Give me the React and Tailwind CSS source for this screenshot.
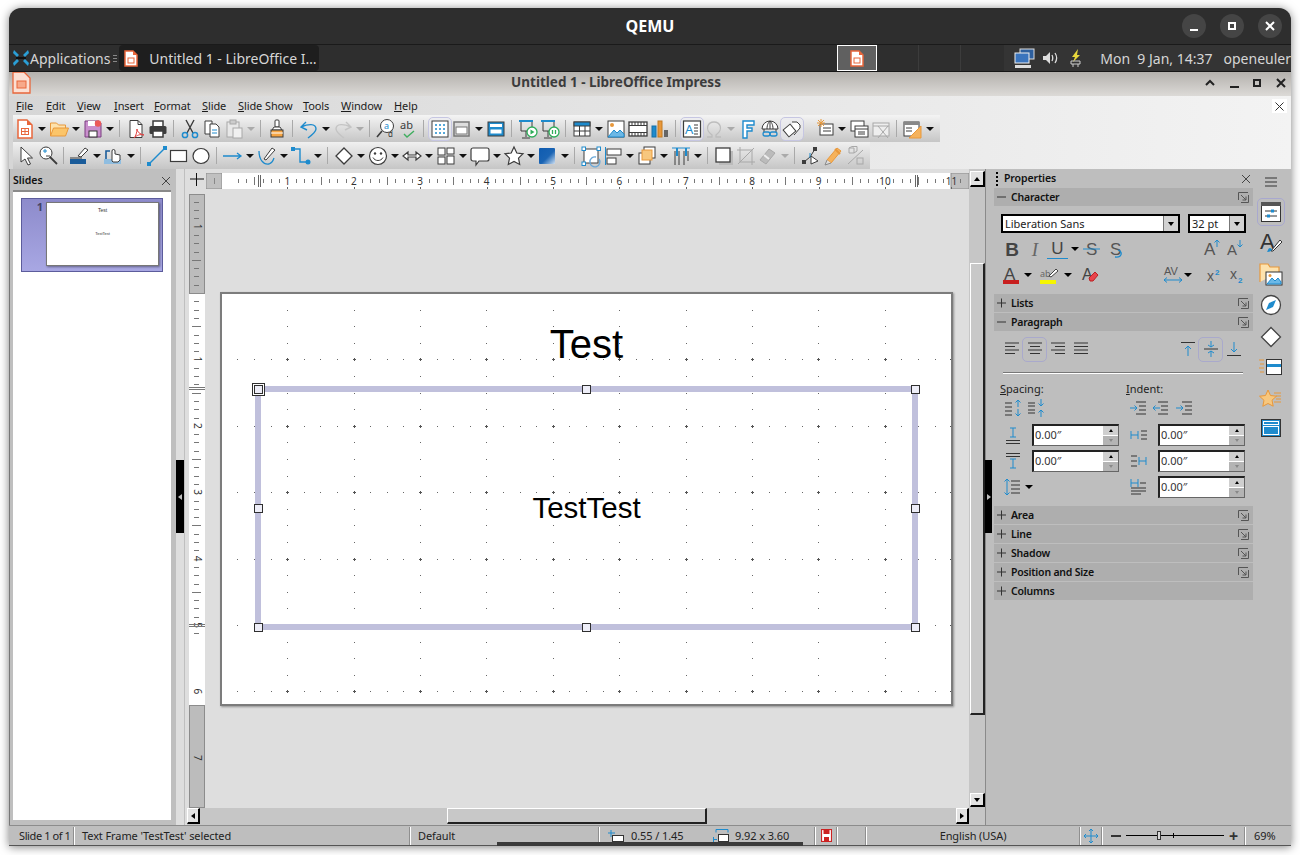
import React from 'react';

const D = '#3c3c3c';
const B = '#1e8bcd';
const O = '#e8983b';
const G = '#a8a8a8';

const icons = {
  new: <><path d="M4 2h9l5 5v13H4z" fill="#fff" stroke="#e8663b" strokeWidth="1.5" /><path d="M13 2l5 5h-5z" fill="#e8663b" /><rect x="7.5" y="10.5" width="7" height="6" fill="#fff" stroke="#e8663b" /><path d="M8 13.5h6M11 11v5" stroke="#e8663b" /></>,
  open: <><path d="M2.5 18V5h6l2 2h7v3" fill="#fde2ad" stroke={O} /><path d="M2.5 18l3-8h15l-3 8z" fill="#fbc56a" stroke={O} /></>,
  save: <><path d="M3 3h14l2 2v14H3z" fill="#c98fcd" stroke="#7a3c80" /><rect x="7" y="13" width="8" height="6" fill="#fff" stroke="#333" /><rect x="6" y="3" width="7" height="5" fill="#fff" /><circle cx="16" cy="5.5" r="3.2" fill="#ec5a5a" /></>,
  pdf: <><path d="M5 2.5h8l4 4v13H5z" fill="#fff" stroke={D} /><path d="M13 2.5v4h4" stroke={D} /><path d="M9 20c2-2 3-6 3-9 0 3 3 5 7 6-4-1-7 0-10 3z" fill="none" stroke="#e04040" /></>,
  print: <><rect x="6" y="3" width="10" height="6" fill="#fff" stroke={D} strokeWidth="1.5" /><rect x="2.5" y="8" width="17" height="8" rx="1.5" fill={D} /><rect x="6" y="13" width="10" height="6" fill="#fff" stroke={D} strokeWidth="1.5" /></>,
  cut: <><path d="M7 2l7 13M15 2L8 15" stroke={D} strokeWidth="1.4" /><circle cx="6" cy="17" r="2.6" stroke={B} strokeWidth="1.5" /><circle cx="16" cy="17" r="2.6" stroke={B} strokeWidth="1.5" /></>,
  copy: <><path d="M4 3h7v13H4z" fill="#fff" stroke={D} /><path d="M9 6h6l3 3v10H9z" fill="#fff" stroke={D} /><path d="M11 12h5M11 15h5" stroke={B} /></>,
  paste: <><rect x="4" y="4" width="12" height="15" fill="#e8e8e8" stroke={G} /><rect x="7" y="2" width="6" height="4" fill="#ccc" stroke={G} /><rect x="10" y="10" width="9" height="10" fill="#f0f0f0" stroke={G} /></>,
  brush: <><rect x="9" y="2" width="4" height="7" rx="1" fill="#fff" stroke={D} /><path d="M6 12l2-3h6l2 3z" fill="#fff" stroke={D} /><rect x="5" y="12" width="12" height="7" fill="#f5a443" stroke={D} /><path d="M5 15h12" stroke="#fff" /></>,
  undo: <><path d="M8 4L3 9l6 3M3 9c7-3 15-4 15 2 0 3-4 6-8 9" stroke={B} strokeWidth="1.4" /></>,
  redo: <><path d="M14 4l5 5-6 3M19 9C12 6 4 5 4 11c0 3 4 6 8 9" stroke="#c4c4c4" strokeWidth="1.4" /></>,
  find: <><circle cx="12" cy="8" r="6.5" fill="#fff" stroke={D} /><path d="M7 13l-5 6" stroke={D} strokeWidth="1.6" /><text x="9" y="11" fontSize="9" fill={B} fontFamily="Noto Sans">a</text><text x="13" y="19" fontSize="8" fill={D} fontFamily="Noto Sans">d</text></>,
  spell: <><text x="3" y="11" fontSize="11" fill={D} fontFamily="Noto Sans">ab</text><path d="M7 16l3 3 7-6" stroke="#3fae5f" strokeWidth="1.4" /></>,
  grid: <><rect x="3" y="3" width="16" height="16" fill="#fff" stroke={D} /><path d="M6.5 6.5h1v1h-1zM10.5 6.5h1v1h-1zM14.5 6.5h1v1h-1zM6.5 10.5h1v1h-1zM10.5 10.5h1v1h-1zM14.5 10.5h1v1h-1zM6.5 14.5h1v1h-1zM10.5 14.5h1v1h-1zM14.5 14.5h1v1h-1z" stroke={B} /></>,
  disp: <><rect x="3" y="4" width="15" height="14" fill="#ddd" stroke="#777" strokeWidth="1.5" /><rect x="5" y="9" width="11" height="7" fill="#fff" stroke="#777" /></>,
  master: <><rect x="3" y="4" width="16" height="14" fill={B} stroke={D} /><rect x="5" y="6" width="12" height="3" fill="#fff" /><rect x="5" y="11" width="12" height="5" fill="#fff" stroke={B} /></>,
  start: <><path d="M2 3h14M4 3v10h11V3M9 13v6M5 20h8" stroke={D} /><path d="M2 3h14" stroke={B} strokeWidth="2" /><circle cx="15" cy="14" r="5" fill="#fff" stroke="#2fae5a" strokeWidth="1.3" /><path d="M13.5 11.5l4 2.5-4 2.5z" fill="#2fae5a" /></>,
  pause: <><path d="M4 3v10h11V3M9 13v6M5 20h8" stroke={D} /><path d="M2 3h14" stroke={B} strokeWidth="2" /><circle cx="15" cy="14" r="5" fill="#fff" stroke="#2fae5a" strokeWidth="1.3" /><path d="M13.5 12v4M16.5 12v4" stroke="#2fae5a" strokeWidth="1.3" /></>,
  table: <><rect x="3" y="4" width="16" height="14" fill="#fff" stroke={D} /><rect x="3" y="4" width="16" height="4" fill={B} stroke={D} /><path d="M3 13h16M8.5 8v10M14 8v10" stroke={D} /></>,
  image: <><rect x="3" y="3" width="16" height="16" fill="#fff" stroke={D} /><circle cx="7" cy="7" r="2" fill={O} /><path d="M3 19l6-7 3 3 3-3 4 4v3z" fill="#6cb8e6" stroke={B} /></>,
  film: <><rect x="2" y="4" width="18" height="14" fill="#fff" stroke={D} strokeWidth="1.3" /><path d="M2 7.5h18M2 14.5h18" stroke={D} /><path d="M5 4v3M8 4v3M11 4v3M14 4v3M17 4v3M5 15v3M8 15v3M11 15v3M14 15v3M17 15v3" stroke={D} /></>,
  chart: <><rect x="3" y="8" width="4" height="11" fill={B} stroke="#1670a8" /><rect x="9" y="3" width="4" height="16" fill={O} stroke="#c47a20" /><rect x="15" y="12" width="4" height="7" fill="#666" /></>,
  textbox: <><rect x="2.5" y="3" width="17" height="16" fill="#fff" stroke={D} strokeWidth="1.2" /><text x="4" y="16" fontSize="13" fill={B} fontFamily="Noto Sans">A</text><path d="M13 7h4M13 10h4M13 13h4M13 16h4" stroke={D} /></>,
  omega: <><path d="M4 19h5v-2c-8-6-4-13 2-13s10 7 2 13v2h5" stroke="#bdbdbd" strokeWidth="1.3" /></>,
  fontwork: <><path d="M6 3h11v4h-7v3h5v3h-5v7H6z" fill="#fff" stroke={B} strokeWidth="1.4" /></>,
  hyper: <><path d="M3 11a8 8 0 0 1 16 0zM8 11c0-5 2-7 3-8 1 1 3 3 3 8M11 3v8M5 11v3M17 11v3" stroke={D} fill="#fff" /><rect x="4" y="14" width="7" height="4" rx="2" stroke={B} strokeWidth="1.3" /><rect x="11" y="14" width="7" height="4" rx="2" stroke={B} strokeWidth="1.3" /></>,
  glue: <><path d="M11 4h5l3 3v3l-6 7" fill="#fff" stroke={D} /><rect x="4" y="8" width="9" height="9" fill="#fff" stroke={D} transform="rotate(-40 8.500 12.500)" /></>,
  comment: <><rect x="6" y="6" width="13" height="11" fill="#fff" stroke={D} /><path d="M9 10h8M9 13h8" stroke={D} /><path d="M7 1v8M3 5h8M4 2l6 6M10 2L4 8" stroke={O} /></>,
  dup: <><rect x="3" y="3" width="13" height="10" fill="#fff" stroke={D} /><rect x="7" y="8" width="13" height="11" fill="#fff" stroke={D} /><path d="M7 11h13M10 14h7M10 16h7" stroke={D} /></>,
  del: <><rect x="3" y="5" width="16" height="13" fill="#eee" stroke={G} /><path d="M3 8h16M8 8l10 12M18 8L8 20" stroke={G} /></>,
  layout: <><rect x="2" y="4" width="15" height="14" fill="#fff" stroke={D} /><rect x="2" y="4" width="15" height="3" fill="#888" /><path d="M4 10h6M4 13h6" stroke={D} /><path d="M19 8v12H7z" fill="#f5b25c" stroke={O} /></>,

  pointer: <><path d="M6 2v15l4-3 3 6 2.500-1-3-6h5z" fill="#fff" stroke={D} /></>,
  zoom: <><circle cx="9" cy="8" r="6" fill="#fff" stroke={D} /><path d="M13 12l7 7" stroke={D} strokeWidth="1.8" /><path d="M6 6h4M8 4v4" stroke={B} /><path d="M9 11h4" stroke="#444" /></>,
  linecol: <><rect x="1" y="14" width="16" height="5" fill="#1a5c9a" /><path d="M1 13h12" stroke={D} /><path d="M9 11l7-8 3 2-7 7z" fill="#fff" stroke={D} /></>,
  fillcol: <><rect x="1" y="14" width="17" height="5" fill="#8fbde0" /><path d="M3 14V6h4" stroke="#1a5c9a" strokeWidth="1.6" /><path d="M9 16V6a1.500 1.500 0 0 1 3 0v3l5 1v5l-2 2H10z" fill="#fff" stroke={D} /></>,
  line: <><path d="M3 19L19 3" stroke={B} strokeWidth="1.4" /><rect x="1" y="17" width="4" height="4" fill={B} /><rect x="17" y="1" width="4" height="4" fill={B} /></>,
  rect: <rect x="2.500" y="5.500" width="16" height="11" fill="#fff" stroke={D} strokeWidth="1.2" />,
  ellipse: <ellipse cx="11" cy="11" rx="8" ry="7.500" fill="#fff" stroke={D} strokeWidth="1.2" />,
  arrowl: <><path d="M1 11h18M15 8l4 3-4 3" stroke={B} strokeWidth="1.3" /></>,
  curve: <><path d="M3 6c0 8 4 14 10 13 3-1 4-3 5-6" stroke={B} strokeWidth="1.3" /><path d="M8 14L16 3l3 2-9 10z" fill="#fff" stroke={D} /></>,
  conn: <><path d="M3 4h7v13h8" stroke={B} strokeWidth="1.4" /><rect x="1" y="2" width="4" height="4" fill={B} /><circle cx="18" cy="17" r="2.500" fill={B} /></>,
  diamond: <path d="M11 3l8 8-8 8-8-8z" fill="#fff" stroke={D} strokeWidth="1.3" />,
  smile: <><circle cx="11" cy="11" r="8.500" fill="#fff" stroke={D} strokeWidth="1.2" /><circle cx="8" cy="8.500" r="1.200" fill={D} /><circle cx="14" cy="8.500" r="1.200" fill={D} /><path d="M6 12.500c2 4 8 4 10 0" stroke={D} /></>,
  dbl: <path d="M7 7l-5 4 5 4v-3h8v3l5-4-5-4v3H7z" fill="#fff" stroke={D} strokeWidth="1.2" />,
  flow: <><rect x="3" y="3" width="7" height="7" fill="#fff" stroke={D} /><rect x="3" y="12" width="7" height="7" fill="#fff" stroke={D} /><rect x="12" y="3" width="7" height="6" fill="#fff" stroke={D} /><rect x="12" y="11" width="7" height="8" fill="#fff" stroke={D} /></>,
  callout: <path d="M4 3h14a2 2 0 0 1 2 2v9a2 2 0 0 1-2 2h-8l-3 4v-4H4a2 2 0 0 1-2-2V5a2 2 0 0 1 2-2z" fill="#fff" stroke={D} strokeWidth="1.2" />,
  star: <path d="M11 2l2.800 6 6.200.8-4.500 4.300 1.200 6.400L11 16.500 5.300 19.500l1.200-6.400L2 8.800 8.200 8z" fill="#fff" stroke={D} strokeWidth="1.2" />,
  cube: <><defs><linearGradient id="cg" x1="0" y1="0" x2="1" y2="1"><stop offset="0" stopColor="#0f5cb0" /><stop offset=".55" stopColor="#1a64b4" /><stop offset="1" stopColor="#cfe0f2" /></linearGradient></defs><rect x="2" y="3" width="16" height="16" rx="1" fill="url(#cg)" /></>,
  rotate: <><rect x="4" y="4" width="14" height="14" fill="#fff" stroke={D} /><rect x="2" y="2" width="3.500" height="3.500" fill="#fff" stroke={B} /><rect x="17" y="2" width="3.500" height="3.500" fill="#fff" stroke={B} /><rect x="2" y="17" width="3.500" height="3.500" fill="#fff" stroke={B} /><path d="M19 14a5 5 0 1 1-3-2" stroke="#6aa8d8" strokeWidth="1.4" /></>,
  align: <><path d="M3.500 2v18" stroke={B} /><rect x="5" y="4" width="14" height="6" fill="#fff" stroke={D} /><rect x="5" y="13" width="9" height="6" fill="#fff" stroke={D} /></>,
  arrange: <><rect x="8" y="2" width="11" height="11" fill="#fff" stroke={D} /><rect x="3" y="8" width="11" height="11" fill="#fff" stroke={D} /><rect x="6" y="5" width="10" height="10" fill="#f7c77e" stroke={O} /></>,
  dist: <><path d="M2 3h18" stroke={B} /><path d="M5 6v14M9 6v14M14 6v14M18 6v10" stroke={D} /><path d="M7 3v8M16 3v8" stroke={B} strokeWidth="2" /></>,
  shadow: <><rect x="6" y="6" width="14" height="14" fill="#bbb" /><rect x="3" y="3" width="14" height="14" fill="#fff" stroke={D} strokeWidth="1.300" /></>,
  crop: <><path d="M5 2v15h15M2 5h15v15M3 19L19 3" stroke={G} /></>,
  filter: <><path d="M3 15l9-11 6 4-9 11z" fill="#bbb" stroke={G} /><path d="M7 10l5 4" stroke="#eee" strokeWidth="2" /></>,
  points: <><path d="M4 17l6-5 5-8" stroke={D} /><rect x="2" y="15" width="4" height="4" fill={D} /><rect x="13" y="2" width="4" height="4" fill={D} /><path d="M10 8v5" stroke={B} /><path d="M11 11l7 5-7 3z" fill="#fff" stroke={D} /></>,
  glueP: <><path d="M5 15L15 3l4 3L9 18z" fill="#f5b25c" stroke={O} /><path d="M5 15l-2 5 6-2" fill="#ddd" stroke="#888" /><path d="M13 4l5 5" stroke={O} strokeWidth="2" /></>,
  ext: <><path d="M5 3h5v5H5zM5 3l3-1.500h5V6l-3 2" stroke={G} /><path d="M4 19L19 5" stroke={G} /><rect x="13" y="13" width="6" height="6" stroke={G} /></>,
};

function Ic({ n, on }) {
  return (
    <span className={`w-[22px] h-[22px] shrink-0 flex items-center justify-center rounded-sm ${on ? 'outline outline-1 outline-[#c6c6e2] bg-[#ececf2]/60' : ''}`}>
      <svg width="22" height="22" viewBox="0 0 22 22" fill="none" className="overflow-visible">{icons[n]}</svg>
    </span>
  );
}

const Dd = ({ off }) => (
  <span className="w-[12px] shrink-0 flex justify-center">
    <span className={`w-0 h-0 border-x-[4px] border-x-transparent border-t-[4px] ${off ? 'border-t-[#aaaaaa]' : 'border-t-[#111111]'}`} />
  </span>
);
const Sep = () => <span className="w-px h-[17px] ml-[3px] mr-[5px] shrink-0 bg-[#a9a9a9]" />;
const Sep2 = () => <span className="w-px h-[17px] ml-[4px] mr-[5px] shrink-0 bg-[#a9a9a9]" />;

function Toolbar1() {
  return (
    <div className="w-[927px] h-[27px] flex items-center pl-[1px] bg-gradient-to-b from-[#f4f4f4] to-[#c6c6c6]">
      <Ic n="new" /><Dd /><Ic n="open" /><Dd /><Ic n="save" /><Dd /><Sep />
      <Ic n="pdf" /><Ic n="print" /><Sep2 />
      <Ic n="cut" /><Ic n="copy" /><Ic n="paste" /><Dd off /><Sep />
      <Ic n="brush" /><Sep2 />
      <Ic n="undo" /><Dd /><Ic n="redo" /><Dd off /><Sep />
      <Ic n="find" /><Ic n="spell" /><Sep2 />
      <Ic n="grid" on /><Ic n="disp" /><Dd /><Ic n="master" /><Sep2 />
      <Ic n="start" /><Ic n="pause" /><Sep2 />
      <Ic n="table" /><Dd /><Ic n="image" /><Ic n="film" /><Ic n="chart" /><Sep2 />
      <Ic n="textbox" on /><Ic n="omega" /><Dd off /><Ic n="fontwork" /><Ic n="hyper" /><Ic n="glue" on />
      <span className="w-[11px] shrink-0" />
      <Ic n="comment" /><Dd /><Ic n="dup" /><Ic n="del" /><Sep2 />
      <Ic n="layout" /><Dd />
    </div>
  );
}

function Toolbar2() {
  return (
    <div className="w-[857px] h-[27px] flex items-center pl-[2px] bg-gradient-to-b from-[#f0f0f0] to-[#c6c6c6]">
      <Ic n="pointer" /><Ic n="zoom" /><Sep2 />
      <Ic n="linecol" /><Dd /><Ic n="fillcol" /><Dd /><Sep />
      <Ic n="line" /><Ic n="rect" /><Ic n="ellipse" /><Sep2 />
      <Ic n="arrowl" /><Dd /><Ic n="curve" /><Dd /><Ic n="conn" /><Dd /><Sep />
      <Ic n="diamond" /><Dd /><Ic n="smile" /><Dd /><Ic n="dbl" /><Dd /><Ic n="flow" /><Dd /><Ic n="callout" /><Dd /><Ic n="star" /><Dd /><Ic n="cube" /><Dd /><Sep />
      <Ic n="rotate" /><Ic n="align" /><Dd /><Ic n="arrange" /><Dd /><Ic n="dist" /><Dd /><Sep />
      <Ic n="shadow" /><Ic n="crop" /><Ic n="filter" /><Dd off /><Sep />
      <Ic n="points" /><Ic n="glueP" /><Ic n="ext" />
    </div>
  );
}

const menus = [
  ['File', 'F', 'ile', 'w-[30px]'],
  ['Edit', 'E', 'dit', 'w-[31px]'],
  ['View', 'V', 'iew', 'w-[37px]'],
  ['Insert', 'I', 'nsert', 'w-[40px]'],
  ['Format', 'F', 'ormat', 'w-[48px]'],
  ['Slide', 'S', 'lide', 'w-[36px]'],
  ['Slide Show', 'S', 'lide Show', 'w-[65px]'],
  ['Tools', 'T', 'ools', 'w-[38px]'],
  ['Window', 'W', 'indow', 'w-[53px]'],
  ['Help', 'H', 'elp', 'w-[30px]'],
];

function HRuler() {
  const ticks = [];
  for (let i = 2; i < 90; i++) {
    const x = 15 + i * 8.3;
    if (x > 760 || i % 8 === 0) continue;
    ticks.push(<rect key={i} x={Math.round(x)} y={i % 4 === 0 ? 4 : 6} width="1" height={i % 4 === 0 ? 8 : 4} fill="#777" />);
  }
  const nums = [];
  for (let k = 1; k <= 11; k++) {
    const x = 15 + k * 66.4;
    nums.push(<text key={k} x={x} y="12" fontSize="10" textAnchor="middle" fill="#333" fontFamily="Noto Sans">{k}</text>);
    nums.push(<rect key={'b' + k} x={Math.round(x)} y="14" width="1" height="2" fill="#666" />);
  }
  return (
    <svg width="763" height="16" className="block">
      <rect x="0" y="0" width="16" height="16" fill="#c0c0c0" stroke="#8c8c8c" />
      <rect x="16" y="0" width="729" height="16" fill="#fff" />
      <rect x="745" y="0" width="18" height="16" fill="#c0c0c0" stroke="#8c8c8c" />
      <rect x="8" y="5" width="1" height="6" fill="#888" />
      {ticks}{nums}
      <path d="M52.500 2v12M54.500 2v12M709.500 2v12M711.500 2v12" stroke="#666" />
    </svg>
  );
}

function VRuler() {
  const ticks = [];
  for (let i = -12; i < 42; i++) {
    const y = 99 + i * 8.3;
    if (y < 2 || y > 612 || i % 8 === 0) continue;
    ticks.push(<rect key={i} x={i % 4 === 0 ? 3 : 5} y={Math.round(y)} width={i % 4 === 0 ? 9 : 5} height="1" fill="#777" />);
  }
  const nums = [];
  [-1, 1, 2, 3, 4, 5, 6, 7].forEach((k) => {
    const y = 99 + k * 66.4;
    const n = Math.abs(k);
    nums.push(<text key={k} x="8" y={y} fontSize="10" textAnchor="middle" dominantBaseline="middle" fill="#333" fontFamily="Noto Sans" transform={`rotate(90 8 ${y})`}>{n}</text>);
  });
  return (
    <svg width="16" height="614" className="block shrink-0">
      <rect x="0" y="0" width="16" height="614" fill="#fff" />
      <rect x=".5" y=".5" width="15" height="99" fill="#bcbcbc" stroke="#8c8c8c" />
      <rect x=".5" y="511.500" width="15" height="102" fill="#bcbcbc" stroke="#8c8c8c" />
      {ticks}{nums}
      <path d="M0 193.500h16M0 195.500h16M0 430.500h16M0 432.500h16" stroke="#777" />
    </svg>
  );
}

const Handle = ({ className }) => <span className={`absolute w-[9px] h-[9px] bg-[#eeeef8] border border-[#2f2f2f] ${className}`} />;

function SlideCanvas() {
  return (
    <div className="relative w-[733px] h-[414px] bg-white border-2 border-[#7c7c7c] shadow-[1px_1px_2px_rgba(0,0,0,.35)] shrink-0 font-['Liberation_Sans',sans-serif]">
      <svg width="729" height="410" className="absolute left-0 top-0">
        {Array.from({ length: 46 }).map((_, ix) => Array.from({ length: 26 }).map((__, iy) => {
          const onV = (ix - 3) % 4 === 0;
          const onH = (iy - 3) % 4 === 0;
          if (!onV && !onH) return null;
          const x = Math.round(15.300 + ix * 16.600);
          const y = Math.round(15.500 + iy * 16.600);
          if (onV && onH) return <path key={ix + '-' + iy} d={`M${x - 1} ${y + 0.5}h3M${x + 0.5} ${y - 1}v3`} stroke="#555" />;
          return <rect key={ix + '-' + iy} x={x} y={y} width="1" height="1" fill="#666" />;
        }))}
      </svg>
      <div className="absolute left-0 right-0 top-[25px] text-center text-[40px] leading-[50px] text-black">Test</div>
      <div className="absolute left-[33px] top-[92px] w-[663px] h-[244px] border-[6px] border-[#c0c0dc] flex items-center justify-center text-[29.5px] text-black">TestTest</div>
      <span className="absolute left-[30px] top-[89px] w-[13px] h-[13px] border border-[#2f2f2f] bg-white" />
      <Handle className="left-[32px] top-[91px]" />
      <Handle className="left-[360px] top-[91px]" />
      <Handle className="left-[689px] top-[91px]" />
      <Handle className="left-[32px] top-[210px]" />
      <Handle className="left-[689px] top-[210px]" />
      <Handle className="left-[32px] top-[329px]" />
      <Handle className="left-[360px] top-[329px]" />
      <Handle className="left-[689px] top-[329px]" />
    </div>
  );
}

const SBtn = ({ dir, className = '' }) => (
  <span className={`flex items-center justify-center bg-[#e2e2e2] border-r-2 border-b-2 border-black border-l border-t border-l-white border-t-white shrink-0 ${className}`}>
    {dir === 'u' && <span className="w-0 h-0 border-x-[3px] border-x-transparent border-b-[4px] border-b-black" />}
    {dir === 'd' && <span className="w-0 h-0 border-x-[3px] border-x-transparent border-t-[4px] border-t-black" />}
    {dir === 'l' && <span className="w-0 h-0 border-y-[3px] border-y-transparent border-r-[4px] border-r-black" />}
    {dir === 'r' && <span className="w-0 h-0 border-y-[3px] border-y-transparent border-l-[4px] border-l-black" />}
  </span>
);

const Ext = () => (
  <svg width="11" height="11" viewBox="0 0 11 11" fill="none" className="shrink-0 mr-[2px]">
    <path d="M.5 8V.5H10" stroke="#555" /><path d="M10.500 3v7.500H3" stroke="#555" /><path d="M3 3l5 5M8 4.500V8H4.500" stroke="#555" />
  </svg>
);

function Sec({ label, open, ext = true, className = '' }) {
  return (
    <div className={`h-[18px] bg-[#aeaeae] flex items-center pl-[2px] pr-[2px] ${className}`}>
      <svg width="10" height="10" viewBox="0 0 10 10" className="ml-[1px] shrink-0">
        <path d={open ? 'M0 5h9' : 'M0 5h9M4.500 .5v9'} stroke="#333" fill="none" />
      </svg>
      <span className="ml-[4px] flex-1 text-[10.5px] tracking-[-0.2px] font-semibold text-[#111111] leading-none">{label}</span>
      {ext && <Ext />}
    </div>
  );
}

const ComboBtn = () => (
  <span className="w-[15px] h-full bg-[#d2d2d2] border-l border-[#777777] flex items-center justify-center">
    <span className="w-0 h-0 border-x-[3px] border-x-transparent border-t-[4px] border-t-black" />
  </span>
);

function Spin({ className = '' }) {
  return (
    <div className={`w-[87px] h-[22px] bg-white flex border-t-2 border-l-2 border-[#222222] border-r border-b border-r-[#666666] border-b-[#666666] ${className}`}>
      <span className="flex-1 pl-[1px] text-[11px] leading-[18px] text-[#333333]">0.00″</span>
      <span className="w-[15px] flex flex-col gap-px bg-white">
        <span className="flex-1 bg-[#cfcfcf] flex items-center justify-center"><span className="w-0 h-0 border-x-[2px] border-x-transparent border-b-[3px] border-b-black" /></span>
        <span className="flex-1 bg-[#b4b4b4] flex items-center justify-center"><span className="w-0 h-0 border-x-[2px] border-x-transparent border-t-[3px] border-t-[#888888]" /></span>
      </span>
    </div>
  );
}

const Si = ({ children, w = 22, className = '' }) => (
  <svg width={w} height="20" viewBox={`0 0 ${w} 20`} fill="none" className={`shrink-0 overflow-visible ${className}`}>{children}</svg>
);
const Tri = ({ className = '' }) => <span className={`w-0 h-0 shrink-0 border-x-[4px] border-x-transparent border-t-[4px] border-t-black ${className}`} />;
const Al = ({ rows, on }) => (
  <span className={`w-[23px] h-[23px] shrink-0 flex items-center justify-center rounded-sm ${on ? 'outline outline-1 outline-[#a9a9cc]' : ''}`}>
    <svg width="16" height="14" viewBox="0 0 16 14" fill="none"><path d={rows} stroke="#333" /></svg>
  </span>
);

function Sidebar() {
  return (
    <div className="w-[306px] shrink-0 flex bg-[#bebebe] border-l-[1px] border-[#8a8a8a]">
      <div className="w-[267px] pl-[8px] shrink-0">
        <div className="h-[19px] flex items-center text-[10.5px] tracking-[-0.1px] font-semibold text-[#111111]">
          <span className="flex flex-col gap-[2px] ml-[2px] mr-[6px]">
            <span className="w-[2px] h-[2px] bg-black" /><span className="w-[2px] h-[2px] bg-black" /><span className="w-[2px] h-[2px] bg-black" /><span className="w-[2px] h-[2px] bg-black" />
          </span>
          <span className="flex-1 leading-none">Properties</span>
          <svg width="10" height="10" viewBox="0 0 10 10" className="mr-[2px]"><path d="M1 1l8 8M9 1L1 9" stroke="#444" fill="none" /></svg>
        </div>
        <Sec label="Character" open />
        <div className="h-[88px] pl-[7px] pt-[8px] relative">
          <div className="flex gap-[8px]">
            <div className="w-[179px] h-[19px] bg-white flex border-2 border-black text-[11px] leading-[15px] text-[#222222]">
              <span className="flex-1 pl-[2px]">Liberation Sans</span><ComboBtn />
            </div>
            <div className="w-[58px] h-[19px] bg-white flex border-2 border-black text-[11px] leading-[15px] text-[#222222]">
              <span className="flex-1 pl-[2px]">32 pt</span><ComboBtn />
            </div>
          </div>
          <div className="flex items-center h-[20px] mt-[6px] text-[#444444]">
            <span className="w-[22px] text-center text-[19px] font-bold leading-none font-['Liberation_Sans',sans-serif]">B</span>
            <span className="w-[24px] text-center text-[19px] italic leading-none text-[#666666] font-['Liberation_Serif',serif]">I</span>
            <span className="w-[21px] text-center text-[17px] leading-[18px] border-b-[1.5px] border-[#1e8bcd] font-['Liberation_Sans',sans-serif]">U</span>
            <Tri className="ml-[3px]" />
            <Si w={22} className="ml-[2px]"><text x="5" y="16" fontSize="17" fill="#555" fontFamily="Liberation Sans">S</text><path d="M2 10h17" stroke="#1e8bcd" /></Si>
            <Si w={22} className="ml-[2px]"><text x="5" y="16" fontSize="17" fill="#555" fontFamily="Liberation Sans">S</text><path d="M10 18c7 1 8-5 3-7" stroke="#1e8bcd" strokeWidth="1.300" /></Si>
            <span className="ml-[76px]"><Si><text x="1" y="16" fontSize="17" fill="#555" fontFamily="Liberation Sans">A</text><path d="M14 8V1M11.500 3.500L14 1l2.500 2.500" stroke="#1e8bcd" /></Si></span>
            <span className="ml-[0px]"><Si><text x="2" y="16" fontSize="15" fill="#555" fontFamily="Liberation Sans">A</text><path d="M15 1v7M12.500 5.500L15 8l2.500-2.500" stroke="#1e8bcd" /></Si></span>
          </div>
          <div className="flex items-center h-[20px] mt-[6px] text-[#333333]">
            <span className="w-[22px] text-center"><Si><text x="3" y="15" fontSize="17" fill="#444" fontFamily="Liberation Sans">A</text><rect x="2" y="15" width="16" height="4" fill="#c81f1f" /></Si></span>
            <Tri className="ml-[1px]" />
            <span className="ml-[6px]"><Si w={24}><text x="2" y="12" fontSize="9" fill="#666" fontFamily="Noto Sans">ab</text><path d="M11 11l7-7 2 2-7 6z" fill="#fff" stroke="#444" /><rect x="2" y="15" width="16" height="4" fill="#f5f500" /></Si></span>
            <Tri className="ml-[2px]" />
            <span className="ml-[8px]"><Si><text x="2" y="15" fontSize="16" fill="#444" fontFamily="Liberation Sans">A</text><path d="M9 13l6-6 3 3-5 6h-3z" fill="#e8434c" stroke="#b22" /></Si></span>
            <span className="ml-[59px]"><Si w={24}><text x="3" y="10" fontSize="11" fill="#555" fontFamily="Liberation Sans">AV</text><path d="M3 15h18M6 12.500L3 15l3 2.500M18 12.500l3 2.500-3 2.500" stroke="#1e8bcd" /></Si></span>
            <Tri className="ml-[-1px]" />
            <span className="ml-[13px]"><Si><text x="2" y="16" fontSize="14" fill="#555" fontFamily="Liberation Sans">x</text><text x="10" y="10" fontSize="8" fontWeight="bold" fill="#1e8bcd" fontFamily="Liberation Sans">2</text></Si></span>
            <span className="ml-[1px]"><Si><text x="2" y="14" fontSize="14" fill="#555" fontFamily="Liberation Sans">x</text><text x="10" y="18" fontSize="8" fontWeight="bold" fill="#1e8bcd" fontFamily="Liberation Sans">2</text></Si></span>
          </div>
        </div>
        <Sec label="Lists" className="mb-[1px]" />
        <Sec label="Paragraph" open />
        <div className="flex items-center pl-[6px] pt-[2px] h-[34px]">
          <Al rows="M1 1h14M1 4.500h10M1 8h14M1 11.500h10" />
          <Al rows="M1 1h14M3 4.500h10M1 8h14M3 11.500h10" on />
          <Al rows="M1 1h14M5 4.500h10M1 8h14M5 11.500h10" />
          <Al rows="M1 1h14M1 4.500h14M1 8h14M1 11.500h14" />
          <span className="w-[84px]" />
          <span className="w-[23px] flex justify-center"><Si w={18}><path d="M2 3.500h14" stroke="#333" /><path d="M9 17V7M6 10l3-3 3 3" stroke="#1e8bcd" /></Si></span>
          <span className="w-[23px] h-[23px] flex items-center justify-center outline outline-1 outline-[#a9a9cc] rounded-sm"><Si w={18}><path d="M2 10h14" stroke="#333" /><path d="M9 2v6M6 6l3 2 3-2M9 18v-6M6 14l3-2 3 2" stroke="#1e8bcd" /></Si></span>
          <span className="w-[23px] flex justify-center"><Si w={18}><path d="M2 16.500h14" stroke="#333" /><path d="M9 3v10M6 10l3 3 3-3" stroke="#1e8bcd" /></Si></span>
        </div>
        <div className="ml-[9px] mt-[7px] w-[240px] h-[2px] bg-[#777777] border-b border-white" />
        <div className="flex pl-[6px] mt-[8px] h-[117px]">
          <div className="w-[126px]">
            <div className="text-[11px] leading-[14px] text-[#222222]"><span className="underline">S</span>pacing:</div>
            <div className="flex mt-[1px] ml-[3px] h-[22px] items-center gap-[1px]">
              <Si><path d="M2 5h7M2 9h7M2 13h7M2 17h7" stroke="#333" /><path d="M15 2v7M12.500 4.500L15 2l2.500 2.500M15 18v-7M12.500 15.500L15 18l2.500-2.500" stroke="#1e8bcd" /></Si>
              <Si><path d="M2 5h7M2 8h7M2 12h7M2 15h7" stroke="#333" /><path d="M15 1v7M12.500 5.500L15 8l2.500-2.500M15 19v-7M12.500 14.500L15 12l2.500 2.500" stroke="#1e8bcd" /></Si>
            </div>
            <div className="flex items-center mt-[5px]">
              <span className="w-[32px] pl-[4px]"><Si><path d="M2 15.500h14M2 18.500h14" stroke="#333" /><path d="M9 3v9M6 3h6M6 12h6" stroke="#1e8bcd" /></Si></span>
              <Spin />
            </div>
            <div className="flex items-center mt-[4px]">
              <span className="w-[32px] pl-[4px]"><Si><path d="M2 2.500h14M2 5.500h14" stroke="#333" /><path d="M9 8v9M6 8h6M6 17h6" stroke="#1e8bcd" /></Si></span>
              <Spin />
            </div>
            <div className="flex items-center mt-[5px] h-[20px] pl-[3px]">
              <Si w={18}><path d="M8 4h9M8 8h9M8 12h9M8 16h9" stroke="#333" /><path d="M4 2v16M1.500 4.500L4 2l2.500 2.500M1.500 15.500L4 18l2.500-2.500" stroke="#1e8bcd" /></Si>
              <Tri className="ml-[4px]" />
            </div>
          </div>
          <div className="w-[120px]">
            <div className="text-[11px] leading-[14px] text-[#222222]"><span className="underline">I</span>ndent:</div>
            <div className="flex mt-[1px] ml-[3px] h-[22px] items-center gap-[1px]">
              <Si w={21}><path d="M7 4h10M10 8h7M10 12h7M7 16h10" stroke="#333" /><path d="M1 10h7M5.500 7.500L8 10l-2.500 2.500" stroke="#1e8bcd" /></Si>
              <Si w={23}><path d="M7 4h10M10 8h7M10 12h7M7 16h10" stroke="#333" /><path d="M2 10h7M4.500 7.500L2 10l2.500 2.500" stroke="#1e8bcd" /></Si>
              <Si w={21}><path d="M7 4h10M10 8h7M10 12h7M7 16h10" stroke="#333" /><path d="M1 10h7M5.500 7.500L8 10l-2.500 2.500" stroke="#1e8bcd" /></Si>
            </div>
            <div className="flex items-center mt-[5px]">
              <span className="w-[32px] pl-[4px]"><Si><path d="M1 6v8M8 6v8M1 10h7" stroke="#1e8bcd" /><path d="M11 6h6M11 10h6M11 14h6" stroke="#333" /></Si></span>
              <Spin />
            </div>
            <div className="flex items-center mt-[4px]">
              <span className="w-[32px] pl-[4px]"><Si><path d="M1 5h6M1 10h6M1 15h6" stroke="#333" /><path d="M9 6v8M16 6v8M9 10h7" stroke="#1e8bcd" /></Si></span>
              <Spin />
            </div>
            <div className="flex items-center mt-[4px]">
              <span className="w-[32px] pl-[4px]"><Si><path d="M1 2v8M8 2v8M1 6h7" stroke="#1e8bcd" /><path d="M10 6h6M1 11h15M1 14h15M1 17h10" stroke="#333" /></Si></span>
              <Spin />
            </div>
          </div>
        </div>
        <div className="mt-[7px] flex flex-col gap-[1px]">
          <Sec label="Area" />
          <Sec label="Line" />
          <Sec label="Shadow" />
          <Sec label="Position and Size" />
          <Sec label="Columns" ext={false} />
        </div>
      </div>
      <div className="flex-1 flex flex-col items-center pr-[2px]">
        <svg width="12" height="10" viewBox="0 0 12 10" className="mt-[8px] shrink-0"><path d="M0 1h12M0 5h12M0 9h12" stroke="#333" fill="none" /></svg>
        <span className="mt-[12px] w-[26px] h-[26px] shrink-0 outline outline-1 outline-[#a8a8cf] rounded-sm flex items-center justify-center">
          <svg width="20" height="20" viewBox="0 0 20 20" fill="none"><rect x=".5" y=".5" width="19" height="19" fill="#fff" stroke="#333" /><rect x="0" y="0" width="20" height="4" fill="#555" /><path d="M4 9h12M4 14h12" stroke="#333" /><rect x="10" y="7.500" width="3" height="3" fill="#1e8bcd" /><rect x="6" y="12.500" width="3" height="3" fill="#1e8bcd" /></svg>
        </span>
        <svg width="24" height="24" viewBox="0 0 24 24" fill="none" className="mt-[5px] shrink-0"><text x="1" y="19" fontSize="22" fill="#333" fontFamily="Liberation Sans">A</text><path d="M12 21l9-11 2 2-9 9z" fill="#fff" stroke="#333" /><path d="M8 22c3 0 5-1 5-3l-2-1c-2 0-2 3-3 4z" fill="#1e8bcd" /></svg>
        <svg width="24" height="24" viewBox="0 0 24 24" fill="none" className="mt-[8px] shrink-0"><path d="M1 20V2h8l2 3h9v5" fill="#fde2ad" stroke="#e8983b" strokeWidth="1.2" /><rect x="7" y="10" width="16" height="13" fill="#fff" stroke="#333" /><circle cx="11" cy="13.500" r="1.500" fill="#e8983b" /><path d="M8 22l5-6 3 3 3-3 3 4v2z" fill="#6cb8e6" stroke="#1e8bcd" /></svg>
        <svg width="22" height="22" viewBox="0 0 22 22" fill="none" className="mt-[8px] shrink-0"><circle cx="11" cy="11" r="9.500" fill="#fff" stroke="#444" strokeWidth="1.3" /><path d="M16 6l-3 7-7 3 3-7z" fill="#1e8bcd" /></svg>
        <svg width="22" height="22" viewBox="0 0 22 22" fill="none" className="mt-[10px] shrink-0"><path d="M11 1.500l9.500 9.500-9.500 9.500L1.500 11z" fill="#fff" stroke="#444" strokeWidth="1.3" /></svg>
        <svg width="24" height="20" viewBox="0 0 24 20" fill="none" className="mt-[9px] shrink-0"><path d="M0 3h5M1 7h4M0 11h5M1 15h4" stroke="#e8983b" /><rect x="7.500" y="2.500" width="15" height="15" fill="#fff" stroke="#333" /><rect x="8" y="7" width="14" height="3" fill="#1e8bcd" /></svg>
        <svg width="24" height="20" viewBox="0 0 24 20" fill="none" className="mt-[12px] shrink-0"><path d="M9 1l2.500 5.500 6 .7-4.500 4 1.200 6L9 14.500 3.800 17.300 5 11.300.5 7.200l6-.7z" fill="#f7c77e" stroke="#e8983b" /><path d="M15 4h7M17 7h5M17 10h5M15 13h7" stroke="#e8983b" /></svg>
        <svg width="20" height="18" viewBox="0 0 20 18" fill="none" className="mt-[10px] shrink-0"><rect x=".5" y=".5" width="19" height="17" fill="#1e8bcd" stroke="#333" /><rect x="2.500" y="2.500" width="15" height="3" fill="#1e8bcd" stroke="#fff" /><rect x="2.500" y="7.500" width="15" height="8" fill="#1e8bcd" stroke="#fff" /></svg>
      </div>
    </div>
  );
}

const StatusSep = () => <span className="w-[2px] h-[18px] shrink-0 bg-[#8f8f8f] border-r border-white" />;

function StatusBar() {
  return (
    <div className="h-[21px] shrink-0 flex items-center bg-[#bebebe] border-t border-[#8c8c8c] border-b border-b-[#555555] text-[11px] tracking-[-0.1px] whitespace-nowrap text-[#222222] leading-none relative">
      <span className="w-[64px] pl-[10px] shrink-0 tracking-[-0.4px]">Slide 1 of 1</span><StatusSep />
      <span className="w-[334px] pl-[7px] shrink-0">Text Frame 'TestTest' selected</span><StatusSep />
      <span className="w-[187px] pl-[7px] shrink-0">Default</span><StatusSep />
      <span className="w-[103px] shrink-0 flex items-center pl-[8px]">
        <svg width="16" height="14" viewBox="0 0 16 14" fill="none"><rect x="4.500" y="6.500" width="11" height="6" fill="#fff" stroke="#333" /><path d="M3 1v7M0 4h7" stroke="#1e8bcd" /></svg>
        <span className="ml-[7px]">0.55 / 1.45</span>
      </span>
      <span className="w-[111px] shrink-0 flex items-center pl-[10px]">
        <svg width="16" height="14" viewBox="0 0 16 14" fill="none"><path d="M3 .5h12M3 .5v3M15 .5v3M.5 8v5M0 10.500h4" stroke="#1e8bcd" /><rect x="5.500" y="5.500" width="10" height="7" fill="#fff" stroke="#333" /></svg>
        <span className="ml-[6px]">9.92 x 3.60</span>
      </span>
      <StatusSep />
      <span className="w-[20px] shrink-0 flex justify-center">
        <svg width="11" height="13" viewBox="0 0 11 13" fill="none"><rect x=".5" y=".5" width="10" height="12" fill="#fff" stroke="#cc2222" strokeWidth="1.200" /><rect x="2.500" y="1" width="6" height="4" fill="#cc2222" /><rect x="3" y="8" width="5" height="4" fill="#cc2222" /></svg>
      </span>
      <StatusSep />
      <span className="w-[27px] shrink-0" /><StatusSep />
      <span className="w-[212px] shrink-0 text-center">English (USA)</span><StatusSep />
      <span className="w-[20px] shrink-0 flex justify-center">
        <svg width="14" height="14" viewBox="0 0 14 14" fill="none"><path d="M7 0v14M0 7h14M5 2l2-2 2 2M5 12l2 2 2-2M2 5L0 7l2 2M12 5l2 2-2 2" stroke="#1e8bcd" /></svg>
      </span>
      <StatusSep />
      <span className="w-[141px] shrink-0 flex items-center pl-[8px]">
        <span className="w-[10px] h-[2px] bg-[#333333]" />
        <span className="ml-[5px] relative w-[98px] h-[1px] bg-black">
          <span className="absolute left-[31px] top-[-4px] w-[4px] h-[9px] bg-[#d8d8d8] border border-[#333333]" />
          <span className="absolute left-[47px] top-[-2px] w-px h-[5px] bg-black" />
        </span>
        <span className="ml-[5px] text-[16px] font-bold text-[#333333] leading-none">+</span>
      </span>
      <StatusSep />
      <span className="flex-1 pl-[8px]">69%</span>
    </div>
  );
}

export default function App() {
  return (
    <div className="w-[1300px] h-[855px] bg-white relative overflow-hidden font-['Noto_Sans',sans-serif]">
      <div className="absolute left-[9px] top-[8px] w-[1282px] h-[838px] rounded-t-[12px] bg-[#2e2e2e] shadow-[0_1px_10px_rgba(0,0,0,.5)] flex flex-col overflow-hidden">
        {/* QEMU title */}
        <div className="h-[37px] shrink-0 flex items-center justify-center relative border-b border-[#1a1a1a]">
          <span className="text-[16px] font-bold text-white font-['Open_Sans',sans-serif]">QEMU</span>
          <div className="absolute right-[9px] top-[6px] flex gap-[14px]">
            <span className="w-[24px] h-[24px] rounded-full bg-[#454545] flex items-end justify-center pb-[7px]"><span className="w-[8px] h-[2px] bg-white" /></span>
            <span className="w-[24px] h-[24px] rounded-full bg-[#454545] flex items-center justify-center"><span className="w-[8px] h-[8px] border-2 border-white" /></span>
            <span className="w-[24px] h-[24px] rounded-full bg-[#454545] flex items-center justify-center">
              <svg width="10" height="10" viewBox="0 0 10 10"><path d="M1 1l8 8M9 1L1 9" stroke="#fff" strokeWidth="2" fill="none" /></svg>
            </span>
          </div>
        </div>
        {/* xfce panel */}
        <div className="h-[27px] shrink-0 flex items-center text-[14px] text-[#d6d6d6] border-b border-[#161616]">
          <svg width="16" height="18" viewBox="0 0 16 18" className="ml-[4px] shrink-0"><path d="M1 1l5 5-2 2-4-4zM15 1l-5 5 2 2 4-4zM1 17l5-5-2-2-4 4zM15 17l-5-5 2-2 4 4z" fill="#2a9fd6" /><rect x="3" y="8" width="10" height="2" fill="#111" /></svg>
          <span className="ml-[1px] w-[84px] pt-[1px]">Applications</span>
          <span className="flex flex-col gap-[2px] w-[6px]"><span className="h-px w-[4px] bg-[#888888]" /><span className="h-px w-[4px] bg-[#888888]" /><span className="h-px w-[4px] bg-[#888888]" /></span>
          <div className="w-[200px] h-[26px] rounded-[4px] bg-[#1e1e1e] flex items-center pl-[5px] shrink-0">
            <svg width="14" height="17" viewBox="0 0 14 17" className="shrink-0"><path d="M1 1h8l4 4v11H1z" fill="#fff" stroke="#e8663b" strokeWidth="1.500" /><path d="M9 1l4 4H9z" fill="#e8663b" /><rect x="4" y="8" width="6" height="5" fill="none" stroke="#e8663b" /></svg>
            <span className="ml-[11px] pt-[1px] whitespace-nowrap">Untitled 1 - LibreOffice I…</span>
          </div>
          <span className="w-[518px] shrink-0" />
          <div className="w-[40px] h-[26px] bg-[#606060] border border-white flex items-center justify-center shrink-0">
            <svg width="14" height="17" viewBox="0 0 14 17"><path d="M1 1h8l4 4v11H1z" fill="#fff" stroke="#e8663b" strokeWidth="1.500" /><path d="M9 1l4 4H9z" fill="#e8663b" /><rect x="4" y="8" width="6" height="5" fill="none" stroke="#e8663b" /></svg>
          </div>
          <span className="w-[41px] shrink-0" /><span className="w-px h-full bg-[#3c3c3c]" />
          <span className="w-[41px] shrink-0" /><span className="w-px h-full bg-[#3c3c3c]" />
          <span className="w-[43px] shrink-0" />
          <div className="flex-1 h-full bg-[#343434] flex items-center pl-[10px] whitespace-nowrap">
            <svg width="21" height="21" viewBox="0 0 21 21" className="shrink-0"><rect x="6" y="1" width="14" height="10" fill="#2d5f9e" stroke="#ddd" /><rect x="1" y="5" width="14" height="10" fill="#3a74bd" stroke="#eee" /><rect x="1" y="17" width="16" height="3" fill="#ddd" /></svg>
            <svg width="16" height="14" viewBox="0 0 16 14" className="ml-[7px] shrink-0" fill="none"><path d="M1 5h3l4-4v12L4 9H1z" fill="#ddd" /><path d="M10 4c1 2 1 4 0 6M13 2c2 3 2 7 0 10" stroke="#ddd" strokeWidth="1.300" /></svg>
            <svg width="16" height="18" viewBox="0 0 16 18" className="ml-[10px] shrink-0" fill="none"><path d="M10 0L4 8h3l-2 5 7-7H9z" fill="#e8d83b" /><path d="M3 12h9v3H3zM5 15v3M10 15v3" stroke="#ccc" /></svg>
            <span className="ml-[16px] pt-[1px]">Mon&nbsp;&nbsp;9 Jan, 14:37</span>
            <span className="ml-[11px] pt-[1px]">openeuler</span>
          </div>
        </div>
        {/* LO title */}
        <div className="h-[24px] shrink-0 relative flex items-center justify-center pb-[3px] bg-gradient-to-b from-[#b4b1ad] to-[#dcdad7] text-[13.500px] font-bold text-[#3c3c3c]">
          <svg width="19" height="22" viewBox="0 0 19 22" className="absolute left-[3px] top-0"><path d="M1 0h11l6 6v15H1z" fill="#fbe0d4" stroke="#e8663b" strokeWidth="1.300" /><rect x="5" y="9" width="9" height="7" fill="#f7a98a" stroke="#e8663b" /></svg>
          <span className="mr-[68px]">Untitled 1 - LibreOffice Impress</span>
          <div className="absolute right-[5px] top-[6px] flex items-center">
            <svg width="10" height="8" viewBox="0 0 10 8"><path d="M1 6l4-4 4 4" stroke="#222" strokeWidth="2" fill="none" /></svg>
            <span className="ml-[15px] w-[9px] h-[2px] mt-[7px] bg-[#222222]" />
            <span className="ml-[14px] w-[8px] h-[8px] border-2 border-[#222222]" />
            <svg width="10" height="10" viewBox="0 0 10 10" className="ml-[15px]"><path d="M1 1l8 8M9 1L1 9" stroke="#222" strokeWidth="2" fill="none" /></svg>
          </div>
        </div>
        {/* menu + toolbars */}
        <div className="h-[73px] shrink-0 bg-gradient-to-r from-[#d6d6d6] to-[#f3f3f3]">
          <div className="h-[19px] flex items-center pl-[7px] pb-[1px] relative text-[11px] tracking-[-0.1px] text-[#1c1c1c]">
            {menus.map((m) => (
              <span key={m[0]} className={`${m[3]} shrink-0 leading-none`}><span className="underline">{m[1]}</span>{m[2]}</span>
            ))}
            <span className="absolute right-[4px] top-[3px] w-[15px] h-[14px] bg-white flex items-center justify-center">
              <svg width="9" height="9" viewBox="0 0 9 9"><path d="M.5.5l8 8M8.500.5l-8 8" stroke="#333" fill="none" /></svg>
            </span>
          </div>
          <div className="pl-[4px]"><Toolbar1 /><Toolbar2 /></div>
        </div>
        {/* main */}
        <div className="flex-1 min-h-0 flex bg-[#dedede]">
          <div className="w-[167px] shrink-0 bg-[#bfbfbf] flex flex-col pl-[3px] pr-[5px] border-l border-[#777777]">
            <div className="h-[21px] pt-[2px] flex items-center justify-between shrink-0 text-[10.5px] font-semibold text-[#111111]">
              <span className="leading-none">Slides</span>
              <svg width="10" height="10" viewBox="0 0 10 10"><path d="M1 1l8 8M9 1L1 9" stroke="#444" fill="none" /></svg>
            </div>
            <div className="flex-1 mb-[5px] bg-white border-t-2 border-[#8a8a8a] pt-[6px] pl-[8px]">
              <div className="w-[142px] h-[74px] border border-[#5c5c9c] bg-gradient-to-b from-[#8d8bcb] to-[#a8a7e3] flex">
                <span className="w-[24px] text-right pr-[3px] pt-[2px] text-[11px] font-bold text-[#444466] leading-none">1</span>
                <div className="w-[113px] h-[64px] mt-[3px] bg-white border border-[#777777] shadow-[1px_1px_2px_rgba(0,0,0,.4)] flex flex-col items-center font-['Liberation_Sans',sans-serif]">
                  <span className="mt-[4px] text-[5px] leading-[6px] text-[#333333]">Test</span>
                  <span className="mt-[18px] text-[4px] leading-[5px] text-[#333333]">TestTest</span>
                </div>
              </div>
            </div>
          </div>
          <div className="w-[9px] shrink-0 bg-[#dedede] border-r border-[#bfbfbf] relative">
            <span className="absolute left-0 top-[291px] w-[8px] h-[73px] bg-black flex items-center justify-center">
              <span className="w-0 h-0 border-y-[3px] border-y-transparent border-r-[4px] border-r-[#bdbdbd]" />
            </span>
          </div>
          <div className="flex-1 min-w-0 flex relative">
            <div className="w-[784px] shrink-0 flex flex-col">
              <div className="h-[25px] pt-[4px] flex shrink-0">
                <svg width="21" height="16" viewBox="0 0 21 16" className="shrink-0"><path d="M5 6h14M11.500 0v13" stroke="#111" fill="none" /></svg>
                <HRuler />
              </div>
              <div className="flex-1 min-h-0 flex pl-[4px]">
                <VRuler />
                <div className="pl-[15px] pt-[98px]"><SlideCanvas /></div>
              </div>
              <div className="h-[17px] shrink-0 bg-[#c6c6c6] flex ml-[2px]">
                <SBtn dir="l" className="w-[13px] h-[16px]" />
                <span className="ml-[247px] w-[260px] h-[16px] bg-[#c8c8c8] border-l border-t border-white border-r-2 border-b-2 border-r-[#222222] border-b-[#222222]" />
                <span className="flex-1" />
                <SBtn dir="r" className="w-[13px] h-[16px]" />
              </div>
            </div>
            <div className="w-[16px] shrink-0 flex flex-col items-center bg-[#c6c6c6]">
              <SBtn dir="u" className="w-[15px] h-[16px] mt-[2px]" />
              <span className="mt-[76px] w-[15px] h-[452px] bg-[#c8c8c8] border-l border-t border-white border-r-2 border-b-2 border-r-[#222222] border-b-[#222222]" />
              <span className="flex-1" />
              <SBtn dir="d" className="w-[15px] h-[14px] mb-[18px]" />
            </div>
          </div>
          <div className="relative flex">
            <span className="absolute left-0 top-[291px] w-[7px] h-[73px] bg-black z-10 flex items-center justify-center">
              <span className="w-0 h-0 border-y-[3px] border-y-transparent border-l-[4px] border-l-[#bdbdbd]" />
            </span>
            <Sidebar />
          </div>
        </div>
        <StatusBar />
        <span className="absolute left-[488px] bottom-0 w-[306px] h-[4px] bg-[#3a3a3a]" />
      </div>
    </div>
  );
}
